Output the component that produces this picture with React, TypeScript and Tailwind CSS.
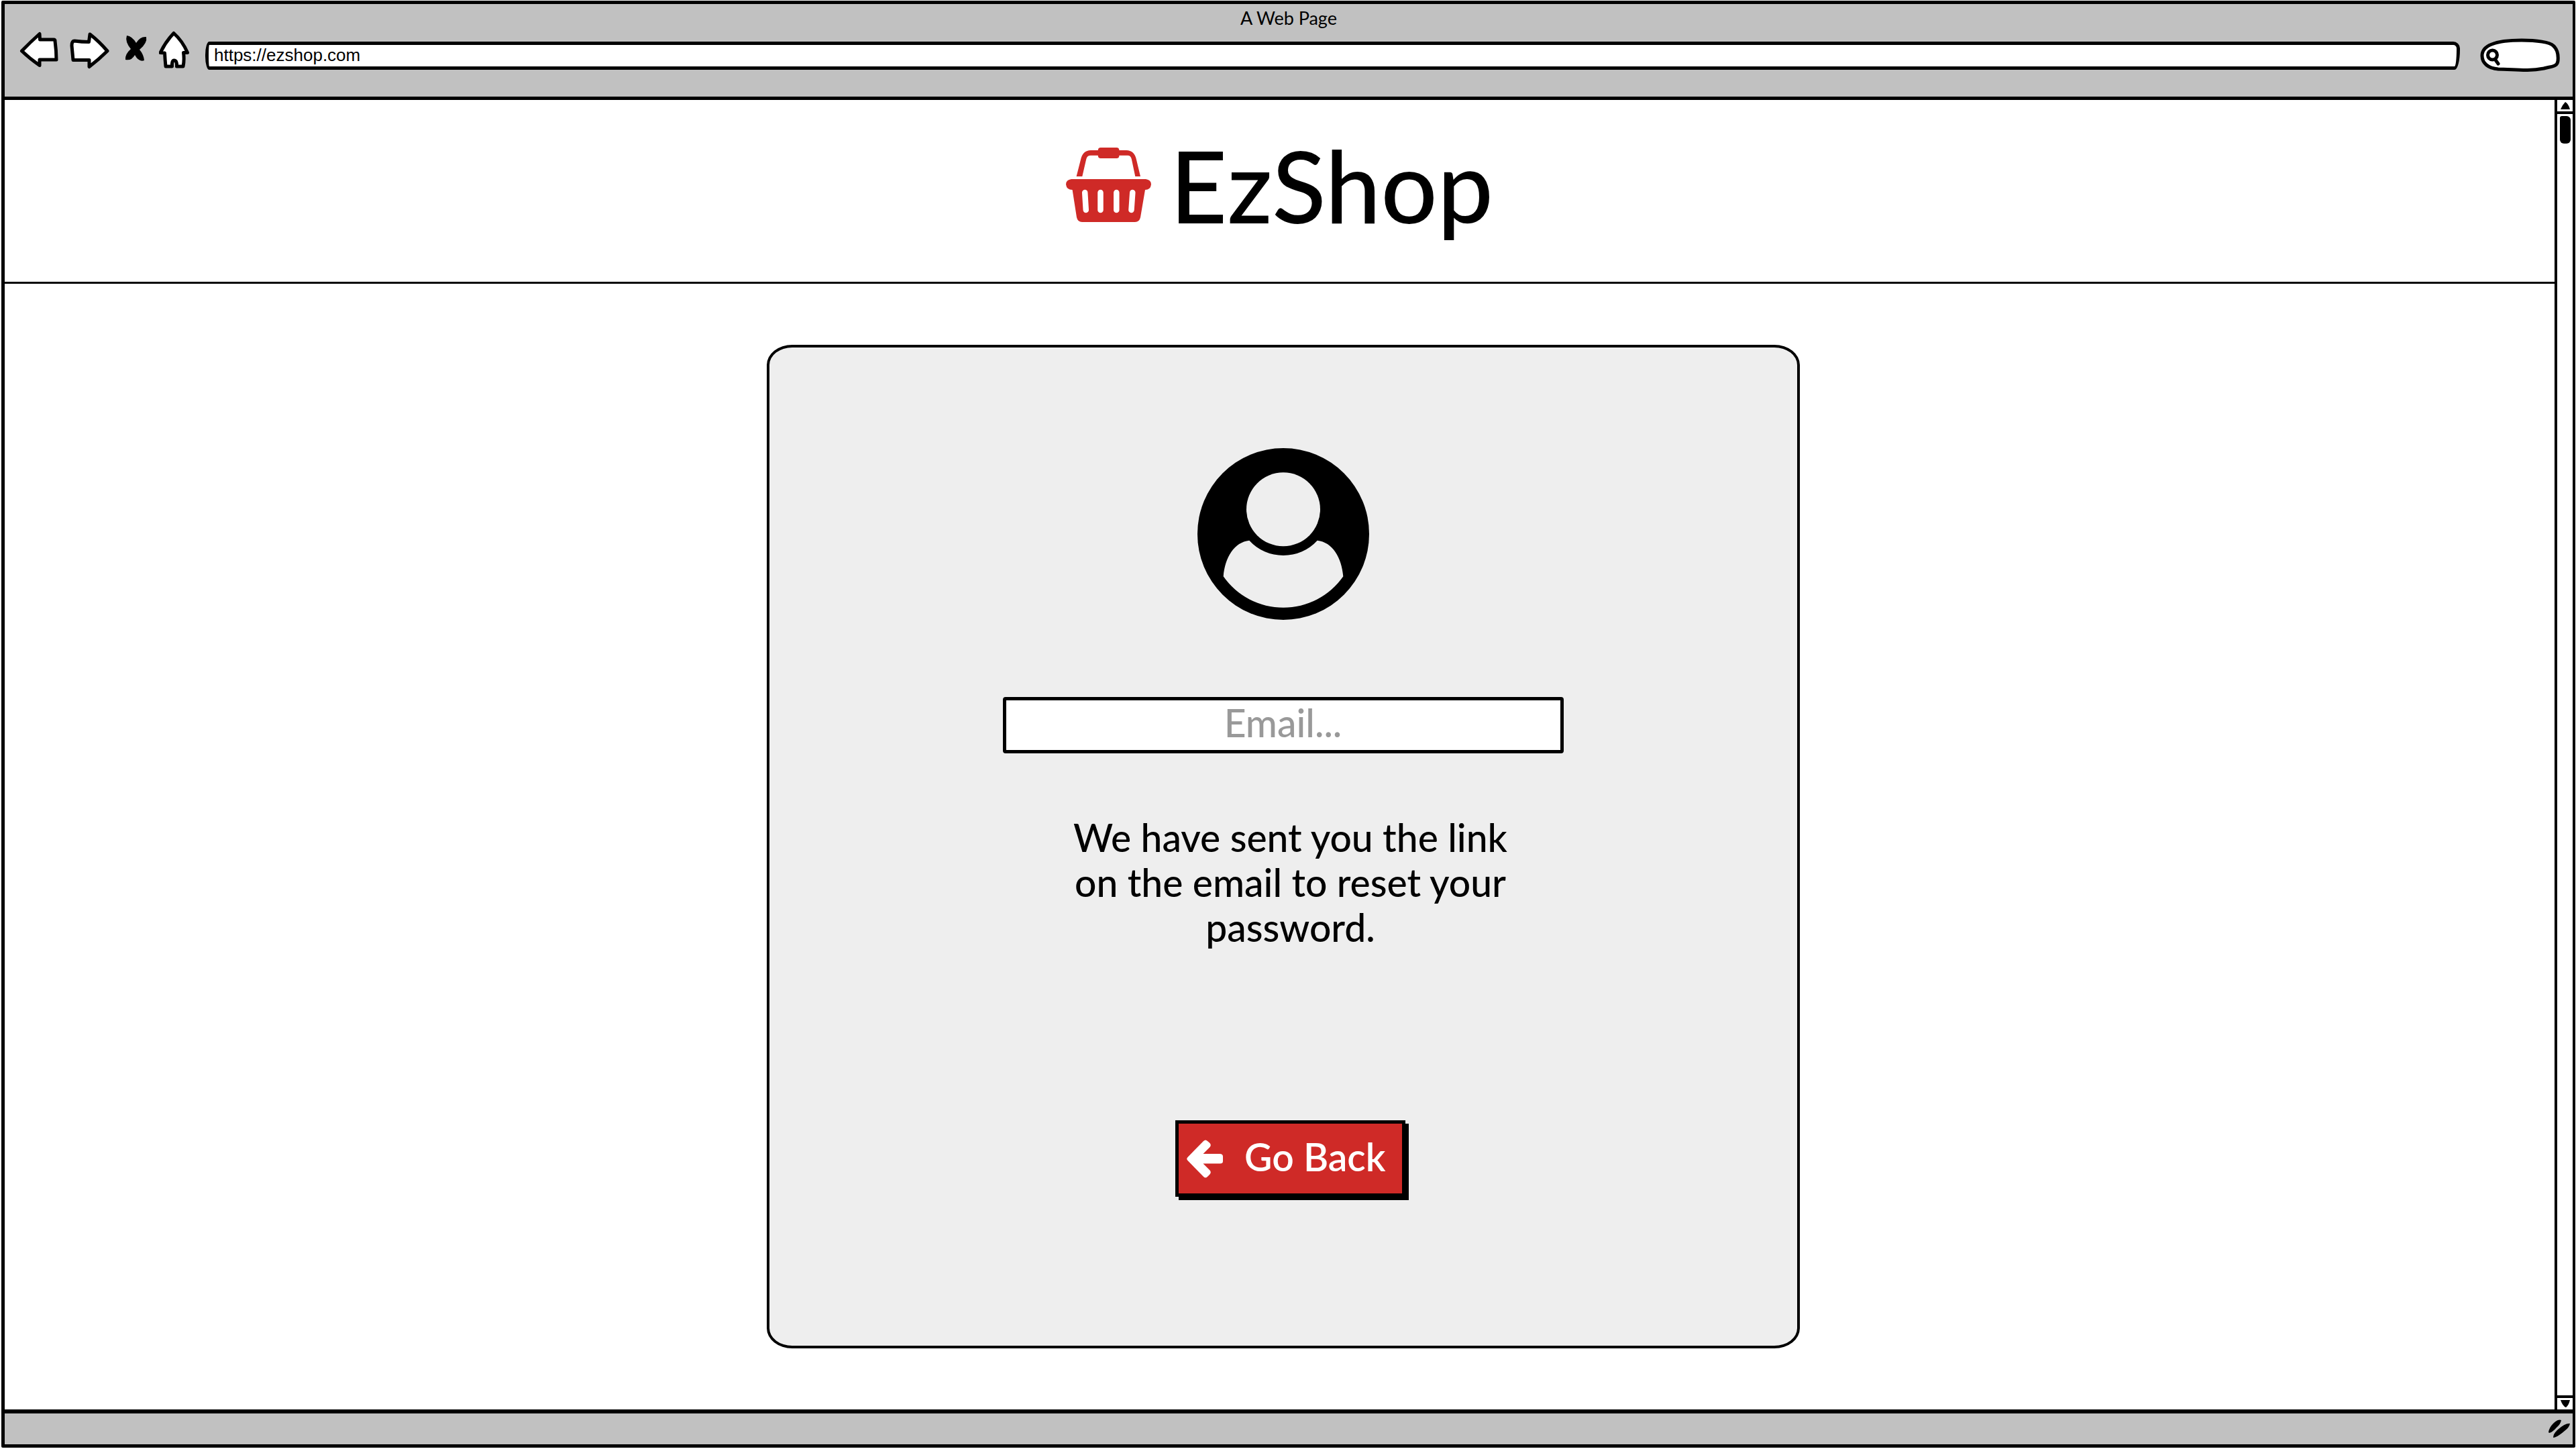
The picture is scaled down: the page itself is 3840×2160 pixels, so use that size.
import React from "react";

function BackIcon() {
  return (
    <svg viewBox="30 45 58 58" className="w-[58px] h-[58px]" aria-hidden="true">
      <path
        d="M33.5 75 Q46 62 60 49.500 L60.500 58 L81 58 Q83 58 83 60 Q85 75 85 88 L60 88 L60 96.500 Q45 86 33.500 75Z"
        fill="#fff" stroke="#000" strokeWidth="5" strokeLinejoin="round"
      />
    </svg>
  );
}

function ForwardIcon() {
  return (
    <svg viewBox="104 45 60 58" className="w-[60px] h-[58px]" aria-hidden="true">
      <path
        d="M112 60 Q123 61.500 133.500 61.500 L135 50 Q149 61 161 75 Q149 87 134 98.500 L134 88.500 L110 88.500 Q109 78 108 67 Q108 60 112 60Z"
        fill="#fff" stroke="#000" strokeWidth="5" strokeLinejoin="round"
      />
    </svg>
  );
}

function StopIcon() {
  return (
    <svg viewBox="180 45 42 58" className="w-[42px] h-[58px]" aria-hidden="true">
      <path
        d="M190 52 Q198 53 204 63 Q210 53 219 54 Q221 63 209 73 Q215 80 216 89 Q208 92 202 81 Q197 90 188 88 Q187 80 196 72 Q187 61 190 52Z"
        fill="#000"
      />
    </svg>
  );
}

function HomeIcon() {
  return (
    <svg viewBox="238 45 53 58" className="w-[53px] h-[58px]" aria-hidden="true">
      <path
        d="M260 48.500 Q273 60 280.500 77.500 L274.500 77.500 Q276 88 274 98 L264.500 98 Q265 89 260.500 89 Q257 89 257.500 98 L248 98 Q247 88 246.500 78 L240 77.500 Q248 61 260 48.500Z"
        fill="#fff" stroke="#000" strokeWidth="5" strokeLinejoin="round"
      />
    </svg>
  );
}

function BasketIcon() {
  return (
    <svg viewBox="0 0 127 111" className="w-[127px] h-[111px]" aria-hidden="true">
      <g fill="#cf2a27">
        <path d="M15.600 43 L22 18 Q25 4 37 4 H90 Q102 4 105 18 L111 43 H103.300 L97.800 17 Q96.500 11.700 92 11.700 H37 Q31.500 11.700 30.300 17 L24.300 43Z" />
        <rect x="47.800" y="0" width="31.600" height="16" rx="4" />
        <path d="M8 47 H119 Q127 48 127 55 Q126 63 118 63 L111 104 Q109.500 111 103 111 H24 Q17.500 111 16 104 L9.600 63 Q1 63 0 55 Q0 48 8 47Z" />
      </g>
      <path
        d="M28.200 67 L29.800 93 M51.500 67 V93 M75.300 67 V93 M99.300 67 L97.500 93"
        stroke="#fff" strokeWidth="8.500" strokeLinecap="round"
      />
    </svg>
  );
}

function AvatarIcon() {
  return (
    <svg viewBox="0 0 256 256" className="w-64 h-64" role="img" aria-label="Account">
      <circle cx="128" cy="128" r="128" />
      <g fill="#eee">
        <circle cx="128" cy="91.300" r="55" />
        <path d="M77.300 137.700 A68.700 68.700 0 0 0 178.700 137.700 C201 140 215 163 217.300 191.300 A109 109 0 0 1 38.700 191.300 C41 163 55 140 77.300 137.700Z" />
      </g>
    </svg>
  );
}

function ArrowLeftIcon() {
  return (
    <svg viewBox="0 0 54 57" className="w-[54px] h-[57px]" aria-hidden="true">
      <path
        d="M1.500 26 L25 2 Q28 -1 31 2 L34.500 5 Q37 8 34.500 11 L24.500 21 H49 Q54 21 54 25 V32 Q54 35.500 50 35.500 H24.500 L34.500 45.500 Q37 48.500 34.500 51.500 L31 55 Q28 58 25 55 L1.500 31 Q-1 28.500 1.500 26Z"
        fill="#fff"
      />
    </svg>
  );
}

function BrowserBar() {
  return (
    <header className="flex flex-col bg-[#c1c1c1] border-b-[5px] border-black pb-9">
      <h1 className="text-center text-[27px] leading-[42px] h-[35px]">A Web Page</h1>
      <div className="flex items-center gap-4 pl-[22px] pr-[18px]">
        <nav className="flex items-center gap-4" aria-label="Browser">
          <button type="button" aria-label="Back"><BackIcon /></button>
          <button type="button" aria-label="Forward"><ForwardIcon /></button>
          <button type="button" aria-label="Stop"><StopIcon /></button>
          <button type="button" aria-label="Home"><HomeIcon /></button>
        </nav>
        <input
          type="text"
          aria-label="Address"
          defaultValue="https://ezshop.com"
          className="mt-4 h-[42px] min-w-0 flex-1 border-[5px] border-black rounded-[6px_10px_8px_6px/20px_10px_30px_20px] bg-white pl-2 font-['Liberation_Sans',sans-serif] text-[26px] leading-8"
        />
        <label className="relative mt-4 ml-3.5 block h-[51px] w-[120px]">
          <svg viewBox="0 0 120 51" className="absolute inset-0 size-full" aria-hidden="true">
            <path
              d="M27 46 C12 45 3 37 3 26 C3 10 24 3 62 3 C85 3 104 6 109 11 C115 16 117 24 116 34 C115 43 105 42 95 45 C70 50 50 46 25 46"
              fill="#fff" stroke="#000" strokeWidth="5" strokeLinejoin="round"
            />
            <path d="M22 31 L27 38" stroke="#000" strokeWidth="5" strokeLinecap="round" />
            <circle cx="18.500" cy="25" r="7" fill="#fff" stroke="#000" strokeWidth="5" />
          </svg>
          <input type="search" aria-label="Search" className="relative ml-8 h-full w-[76px] bg-transparent outline-none" />
        </label>
      </div>
    </header>
  );
}

function ScrollBar() {
  return (
    <aside className="flex w-[27px] shrink-0 flex-col border-l-4 border-black bg-white" aria-label="Scroll bar">
      <button type="button" aria-label="Scroll up" className="flex h-[21px] items-center justify-center border-b-4 border-black">
        <svg viewBox="0 0 14 11" className="w-3.5 h-[11px]" aria-hidden="true">
          <path d="M0 11 Q3 4 7 0 Q12 3 14 11Z" />
        </svg>
      </button>
      <div className="flex flex-1 justify-center pt-[3px]">
        <div className="h-[41px] w-4 rounded-[3px_6px_6px_6px] bg-black" />
      </div>
      <button type="button" aria-label="Scroll down" className="flex h-[21px] items-center justify-center border-t-4 border-black">
        <svg viewBox="0 0 14 11" className="w-3.5 h-[11px]" aria-hidden="true">
          <path d="M0 0 H14 Q12 8 8 11 Q3 9 0 0Z" />
        </svg>
      </button>
    </aside>
  );
}

function ResetCard() {
  return (
    <section className="flex w-[1540px] max-w-full flex-1 flex-col items-center rounded-[38px/30px] border-4 border-black bg-[#eee] pt-[150px]">
      <AvatarIcon />
      <input
        type="email"
        aria-label="Email"
        placeholder="Email..."
        className="mt-[115px] h-[84px] w-[836px] max-w-full rounded-[4px] border-[5px] border-black bg-white pb-1.5 text-center text-[57px] font-medium placeholder:text-[#999] placeholder:opacity-100"
      />
      <div className="ml-[22px] flex flex-col items-center">
        <p className="mt-[92px] text-center text-[57px] leading-[67px] font-medium">
          We have sent you the link
          <br />
          on the email to reset your
          <br />
          password.
        </p>
        <button
          type="button"
          className="mt-[254px] flex h-[114px] w-[343px] items-center gap-8 border-[5px] border-black bg-[#cf2a27] pl-3 text-[57px] leading-[67px] font-semibold text-white shadow-[5px_5px_0_0_#000]"
        >
          <ArrowLeftIcon />
          <span className="pb-1.5">Go Back</span>
        </button>
      </div>
    </section>
  );
}

export default function App() {
  return (
    <div className="flex min-h-screen flex-col bg-white pl-0.5 pr-px pt-px pb-0.5 font-['Lato',sans-serif] text-black">
      <div className="flex flex-1 flex-col rounded-[2px] border-[5px] border-r-4 border-black">
        <BrowserBar />
        <div className="flex flex-1">
          <div className="flex min-w-0 flex-1 flex-col">
            <div className="flex h-[274px] items-center justify-center gap-7 border-b-[3px] border-black pb-[18px]">
              <BasketIcon />
              <span className="text-[148px] leading-[172px] font-medium">EzShop</span>
            </div>
            <main className="flex flex-1 flex-col items-center py-[91px] pl-2.5">
              <ResetCard />
            </main>
          </div>
          <ScrollBar />
        </div>
        <footer className="flex h-[52px] items-center justify-end border-t-[6px] border-black bg-[#c1c1c1] pr-1">
          <svg viewBox="0 0 32 28" className="w-8 h-7" aria-hidden="true">
            <path d="M0 19 Q1 12 7 6 Q14 -1 19 1 Q18 7 12 12 Q6 19 1 20Z M7 27 Q7 21 14 15 Q25 5 32 6 Q31 12 24 17 Q15 25 8 27Z" />
          </svg>
        </footer>
      </div>
    </div>
  );
}
